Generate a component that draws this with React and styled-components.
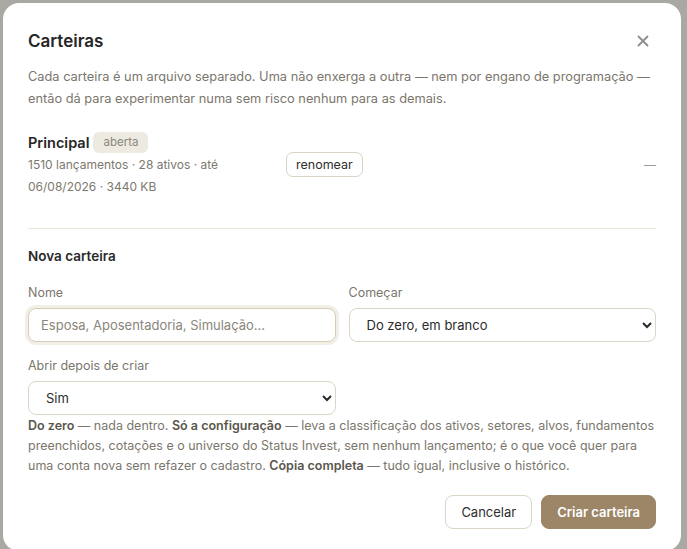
import React from 'react'
import styled, { createGlobalStyle } from 'styled-components'

const GlobalStyle = createGlobalStyle`
  html, body {
    margin: 0;
    padding: 0;
    background: #a9a8a3;
  }
  body {
    font-family: Inter, "Noto Sans", sans-serif;
    -webkit-font-smoothing: antialiased;
  }
`

const Backdrop = styled.div`
  min-height: 100vh;
  padding: 3px 6px 0 3px;
  box-sizing: border-box;
  background: #a9a8a3;
`

const Modal = styled.div`
  width: 678px;
  box-sizing: border-box;
  background: #fff;
  border-radius: 16px;
  padding: 24px 25px 22px 25px;
  color: #2a2a2a;
`

const Header = styled.div`
  display: flex;
  align-items: center;
  justify-content: space-between;
  height: 28px;
`

const Title = styled.h2`
  margin: 0;
  font-size: 17px;
  font-weight: 600;
  color: #262626;
`

const CloseButton = styled.button`
  width: 26px;
  height: 26px;
  display: flex;
  align-items: center;
  justify-content: center;
  border: 0;
  background: none;
  padding: 0;
  color: #8d8d8d;
  cursor: pointer;
`

const Intro = styled.p`
  margin: 11px 0 0;
  font-size: 12.8px;
  line-height: 22px;
  color: #7b766c;
`

const WalletRow = styled.div`
  display: flex;
  align-items: center;
  gap: 12px;
  margin-top: 21px;
  padding-bottom: 30px;
  border-bottom: 1px solid #e8e4d8;
`

const WalletInfo = styled.div`
  width: 246px;
`

const NameLine = styled.div`
  display: flex;
  align-items: center;
  gap: 4px;
  height: 22px;
`

const WalletName = styled.span`
  font-size: 14.5px;
  font-weight: 600;
  color: #262626;
`

const Badge = styled.span`
  background: #edeae2;
  color: #8c877c;
  font-size: 11.5px;
  border-radius: 6px;
  padding: 3px 10px;
  line-height: 15px;
`

const Meta = styled.div`
  font-size: 12px;
  line-height: 22px;
  color: #7d786e;
  margin-top: 1px;
`

const SmallButton = styled.button`
  font-family: inherit;
  font-size: 12.5px;
  color: #2e2e2e;
  background: #fff;
  border: 1px solid #d9d3c4;
  border-radius: 7px;
  height: 25px;
  padding: 0 9px;
  cursor: pointer;
`

const Dash = styled.span`
  margin-left: auto;
  color: #9a9a9a;
  font-size: 12px;
`

const SectionTitle = styled.h3`
  margin: 17px 0 0;
  font-size: 13.5px;
  line-height: 20px;
  font-weight: 600;
  color: #2a2a2a;
`

const FormGrid = styled.div`
  display: grid;
  grid-template-columns: 1fr 1fr;
  column-gap: 13px;
  row-gap: 15px;
  margin-top: 18px;
`

const Field = styled.label`
  display: flex;
  flex-direction: column;
  gap: 6px;
`

const Label = styled.span`
  font-size: 12.5px;
  line-height: 18px;
  color: #7b766c;
`

const TextInput = styled.input`
  height: 34px;
  box-sizing: border-box;
  border: 1px solid #d6ccb8;
  border-radius: 8px;
  padding: 0 12px;
  font-family: inherit;
  font-size: 13px;
  color: #2a2a2a;
  outline: none;
  box-shadow: 0 0 0 3px #f2efe7;
  caret-color: #222;
  &::placeholder {
    color: #8a857a;
  }
`

const Select = styled.select`
  height: 34px;
  box-sizing: border-box;
  border: 1px solid #dcd6c8;
  border-radius: 8px;
  padding: 0 10px 0 13px;
  font-family: inherit;
  font-size: 13px;
  color: #2a2a2a;
  background: #fff;
  outline: none;
`

const Help = styled.div`
  margin: 1px 0 0;
  font-size: 12.5px;
  line-height: 20px;
  color: #7b766c;
`

const Strong = styled.strong`
  color: #5b564d;
  font-weight: 600;
`

const Footer = styled.div`
  display: flex;
  justify-content: flex-end;
  gap: 9px;
  margin-top: 19px;
`

const Button = styled.button`
  height: 34px;
  padding: 0 15px;
  border-radius: 8px;
  font-family: inherit;
  font-size: 13px;
  cursor: pointer;
  border: 1px solid ${p => (p.$primary ? '#9d8668' : '#dcd6c8')};
  background: ${p => (p.$primary ? '#9d8668' : '#fff')};
  color: ${p => (p.$primary ? '#fff' : '#2e2e2e')};
  font-weight: ${p => (p.$primary ? 600 : 400)};
`

export default function App() {
  return (
    <Backdrop>
      <GlobalStyle />
      <Modal>
        <Header>
          <Title>Carteiras</Title>
          <CloseButton aria-label="Fechar">
            <svg width="12" height="12" viewBox="0 0 12 12" fill="none" stroke="currentColor" strokeWidth="1.8" strokeLinecap="round">
              <path d="M1.5 1.5l9 9M10.5 1.5l-9 9" />
            </svg>
          </CloseButton>
        </Header>
        <Intro>
          Cada carteira é um arquivo separado. Uma não enxerga a outra — nem por engano de programação — então dá para experimentar numa sem risco nenhum para as demais.
        </Intro>

        <WalletRow>
          <WalletInfo>
            <NameLine>
              <WalletName>Principal</WalletName>
              <Badge>aberta</Badge>
            </NameLine>
            <Meta>1510 lançamentos · 28 ativos · até 06/08/2026 · 3440 KB</Meta>
          </WalletInfo>
          <SmallButton>renomear</SmallButton>
          <Dash>—</Dash>
        </WalletRow>

        <SectionTitle>Nova carteira</SectionTitle>
        <FormGrid>
          <Field>
            <Label>Nome</Label>
            <TextInput placeholder="Esposa, Aposentadoria, Simulação..." autoFocus />
          </Field>
          <Field>
            <Label>Começar</Label>
            <Select defaultValue="zero">
              <option value="zero">Do zero, em branco</option>
              <option value="config">Só a configuração</option>
              <option value="full">Cópia completa</option>
            </Select>
          </Field>
          <Field>
            <Label>Abrir depois de criar</Label>
            <Select defaultValue="sim">
              <option value="sim">Sim</option>
              <option value="nao">Não</option>
            </Select>
          </Field>
        </FormGrid>
        <Help>
          <Strong>Do zero</Strong> — nada dentro. <Strong>Só a configuração</Strong> — leva a classificação dos ativos, setores, alvos, fundamentos preenchidos, cotações e o universo do Status Invest, sem nenhum lançamento; é o que você quer para uma conta nova sem refazer o cadastro. <Strong>Cópia completa</Strong> — tudo igual, inclusive o histórico.
        </Help>
        <Footer>
          <Button>Cancelar</Button>
          <Button $primary>Criar carteira</Button>
        </Footer>
      </Modal>
    </Backdrop>
  )
}
